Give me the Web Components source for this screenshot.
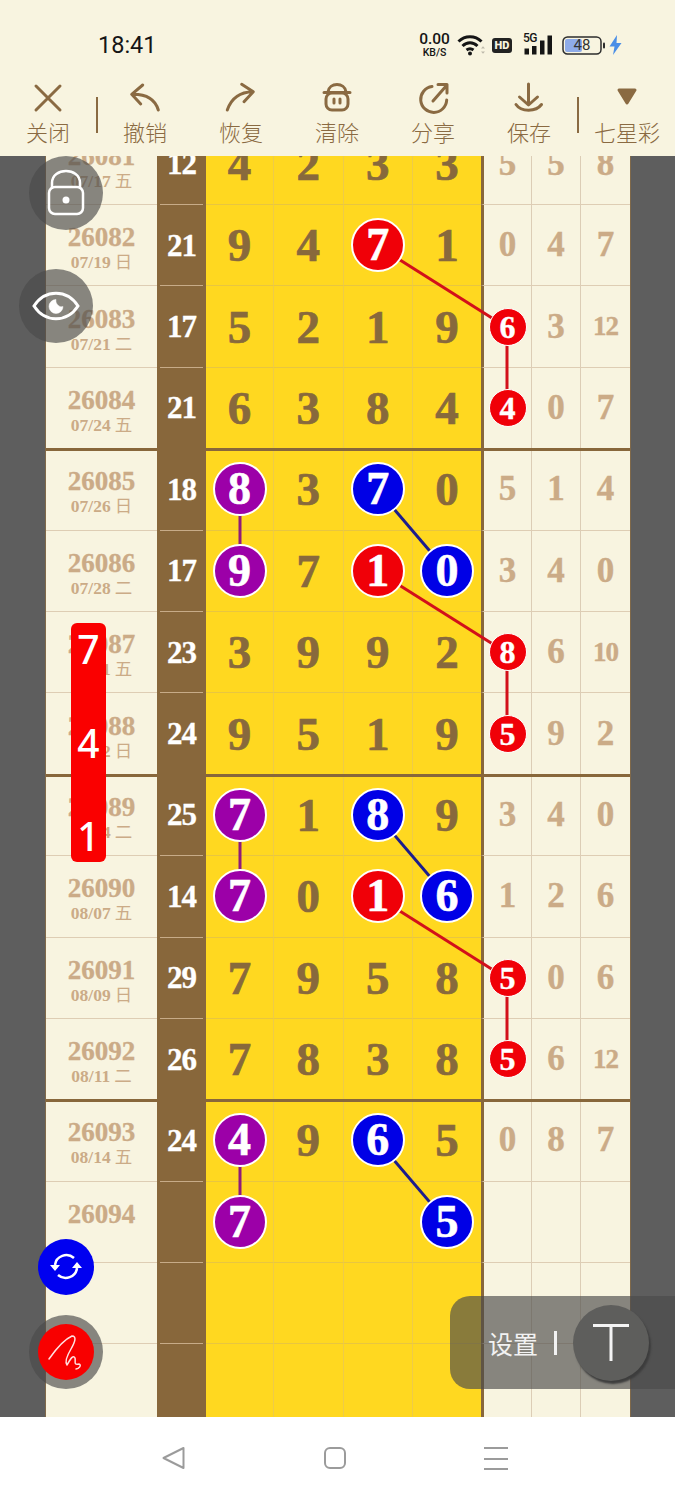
<!DOCTYPE html>
<html lang="zh">
<head>
<meta charset="utf-8">
<title>七星彩</title>
<style>
html, body { margin: 0; padding: 0; }
body { width: 675px; height: 1500px; overflow: hidden; position: relative; display: flex; flex-direction: column; background: #fff; font-family: "Noto Sans CJK SC", sans-serif; }
</style>
</head>
<body>
<status-bar></status-bar>
<tool-bar>
  <tool-item><svg slot="icon" width="40" height="40" viewBox="0 0 40 40"><path d="M8 9 32 33M32 9 8 33"/></svg>关闭</tool-item>
  <tool-sep class="first"></tool-sep>
  <tool-item><svg slot="icon" width="40" height="40" viewBox="0 0 40 40"><path d="M17.7 8 6.7 17.3 15.7 27M7 17.3C20 17 30 22 33.3 33"/></svg>撤销</tool-item>
  <tool-item><svg slot="icon" width="40" height="40" viewBox="0 0 40 40"><path d="M20.7 7.3 32.3 14.7 23 24.7M32 14.7C18 15 10 22 6.3 33"/></svg>恢复</tool-item>
  <tool-item><svg slot="icon" width="40" height="40" viewBox="0 0 40 40"><rect x="9" y="16" width="22" height="17" rx="6"/><path d="M7 15.5H33M11 15C12 5 28 5 29 15M17 22v4M23 22v4"/></svg>清除</tool-item>
  <tool-item><svg slot="icon" width="40" height="40" viewBox="0 0 40 40"><path d="M19 9.5A13 13 0 1 0 33.7 23M20 24 34 8M25 7.5H34V16"/></svg>分享</tool-item>
  <tool-item><svg slot="icon" width="40" height="40" viewBox="0 0 40 40"><path d="M19.5 7V27M10.5 20 19.5 28 28.5 20M7 27.5C12 35 27 35 32.5 27.5"/></svg>保存</tool-item>
  <tool-sep></tool-sep>
  <tool-item><svg slot="icon" width="40" height="40" viewBox="0 0 40 40"><path d="M12 13H28L20 26Z" fill="#8a6a42" stroke-width="3"/></svg>七星彩</tool-item>
</tool-bar>
<lotto-chart></lotto-chart>
<nav-bar></nav-bar>
<float-controls></float-controls>

<script>
const ROW_H = 81.4;

// issue, date, weekday, sum, four main numbers, three tail numbers. suffix = ball colour
const ROWS = [
    ['26081', '07/17', '五', '12', '4 2 3 3', '5 5 8'],
    ['26082', '07/19', '日', '21', '9 4 7r 1', '0 4 7'],
    ['26083', '07/21', '二', '17', '5 2 1 9', '6r 3 12'],
    ['26084', '07/24', '五', '21', '6 3 8 4', '4r 0 7'],
    ['26085', '07/26', '日', '18', '8p 3 7b 0', '5 1 4'],
    ['26086', '07/28', '二', '17', '9p 7 1r 0b', '3 4 0'],
    ['26087', '07/31', '五', '23', '3 9 9 2', '8r 6 10'],
    ['26088', '08/02', '日', '24', '9 5 1 9', '5r 9 2'],
    ['26089', '08/04', '二', '25', '7p 1 8b 9', '3 4 0'],
    ['26090', '08/07', '五', '14', '7p 0 1r 6b', '1 2 6'],
    ['26091', '08/09', '日', '29', '7 9 5 8', '5r 0 6'],
    ['26092', '08/11', '二', '26', '7 8 3 8', '5r 6 12'],
    ['26093', '08/14', '五', '24', '4p 9 6b 5', '0 8 7'],
    ['26094', '', '', '', '7p - - 5b', '- - -'],
    ['', '', '', '', '- - - -', '- - -'],
    ['', '', '', '', '- - - -', '- - -']
];

// from row, from column, to row, to column (column 4 is the first tail column)
const LINKS = [
    [1, 2, 2, 4, '#d2101a'], [2, 4, 3, 4, '#d2101a'],
    [4, 0, 5, 0, '#8e1a7c'], [4, 2, 5, 3, '#1c1c8c'],
    [5, 2, 6, 4, '#d2101a'], [6, 4, 7, 4, '#d2101a'],
    [8, 0, 9, 0, '#8e1a7c'], [8, 2, 9, 3, '#1c1c8c'],
    [9, 2, 10, 4, '#d2101a'], [10, 4, 11, 4, '#d2101a'],
    [12, 0, 13, 0, '#8e1a7c'], [12, 2, 13, 3, '#1c1c8c']
];
const COL_X = [195, 264, 333, 402.5, 462];

class StatusBar extends HTMLElement {
    constructor() {
        super();
        this.attachShadow({ mode: 'open' }).innerHTML = `
            <style>
                :host { display: flex; align-items: center; height: 77px; padding: 13px 0 0 98px; box-sizing: border-box; background: #f8f4e0; color: #151515; font-family: Roboto, sans-serif; }
                .time { font-size: 23.5px; font-weight: 400; width: 320px; }
                .speed { width: 33px; text-align: center; font-weight: 500; line-height: 1; }
                .speed b { display: block; font-size: 15.5px; font-weight: 500; }
                .speed i { display: block; font-style: normal; font-size: 10.5px; margin-top: 1px; }
                .wifi { margin-left: 6px; }
                .hd { margin-left: 7px; width: 20px; height: 15px; border-radius: 3px; background: #222; color: #f8f4e0; font-size: 11px; font-weight: 900; text-align: center; line-height: 15px; }
                .sig { margin-left: 11px; position: relative; width: 29px; height: 20px; }
                .sig span { position: absolute; left: 0; top: -3px; font-size: 12px; font-weight: 500; letter-spacing: -.5px; line-height: 12px; }
                .sig svg { position: absolute; left: 0; top: 0; }
                .bat { margin-left: 10px; position: relative; width: 44px; height: 19px; }
                .bat span { position: absolute; left: 0; right: 4px; top: 0; text-align: center; font-size: 15px; line-height: 19px; color: #333; }
                .bat svg { position: absolute; left: 0; top: 0; }
                .bolt { margin-left: 3px; }
            </style>
            <span class="time">18:41</span>
            <div class="speed"><b>0.00</b><i>KB/S</i></div>
            <svg class="wifi" width="28" height="22" viewBox="0 0 28 22" fill="none" stroke="#151515" stroke-width="3">
                <path d="M1.5 7.5C8 1 18 1 24.5 7.5M5.5 12C10 7.8 16 7.8 20.500 12M9.500 16C11.500 14.500 14.500 14.500 16.500 16"/>
                <circle cx="13" cy="19.500" r="2" fill="#151515" stroke="none"/>
                <path d="M24 14.500l2-2.300 2 2.300zM24 17.500l2 2.300 2-2.300z" fill="#bdb9aa" stroke="none"/>
            </svg>
            <div class="hd">HD</div>
            <div class="sig"><span>5G</span>
                <svg width="29" height="20" viewBox="0 0 29 20" fill="#151515"><rect x="1.500" y="13.500" width="4.500" height="6" /><rect x="9" y="11" width="4.500" height="8.500"/><rect x="17" y="5.500" width="4.500" height="14"/><rect x="24.500" y="0.500" width="4.500" height="19"/></svg>
            </div>
            <div class="bat">
                <svg width="44" height="19" viewBox="0 0 44 19"><rect x="3" y="3" width="17" height="13" rx="2" fill="#8eabe8"/><rect x="1" y="1" width="38" height="17" rx="4.500" fill="none" stroke="#2c2c2c" stroke-width="1.500"/><rect x="41" y="6.500" width="2" height="6" rx="1" fill="#2c2c2c"/></svg>
                <span>48</span>
            </div>
            <svg class="bolt" width="13" height="20" viewBox="0 0 13 20"><path d="M8 0 0.500 11.500H5.500L4 20 12.500 8H7.500Z" fill="#4a8ee6"/></svg>
        `;
    }
}

class ToolBar extends HTMLElement {
    constructor() {
        super();
        this.attachShadow({ mode: 'open' }).innerHTML = `
            <style>
                :host { display: flex; height: 79px; background: #f8f4e0; }
            </style>
            <slot></slot>
        `;
    }
}

class ToolItem extends HTMLElement {
    constructor() {
        super();
        this.attachShadow({ mode: 'open' }).innerHTML = `
            <style>
                :host { display: flex; flex-direction: column; align-items: center; width: 96px; height: 79px; color: #8a6a42; font-family: "Noto Sans CJK SC", sans-serif; font-size: 22px; font-weight: 300; line-height: 26px; }
                ::slotted(svg) { display: block; height: 40px; fill: none; stroke: #8a6a42; stroke-width: 3; stroke-linecap: round; stroke-linejoin: round; }
                .label { margin-top: 1px; white-space: nowrap; }
            </style>
            <slot name="icon"></slot>
            <div class="label"><slot></slot></div>
        `;
    }
}

class ToolSep extends HTMLElement {
    constructor() {
        super();
        this.attachShadow({ mode: 'open' }).innerHTML = `
            <style>
                :host { display: block; width: 2px; height: 36px; margin-top: 20px; background: #8a6a42; }
                :host(.first) { margin-right: -1px; }
            </style>
        `;
    }
}

class LottoBall extends HTMLElement {
    constructor() {
        super();
        this.attachShadow({ mode: 'open' }).innerHTML = `
            <style>
                :host { position: relative; z-index: 2; display: flex; align-items: center; justify-content: center; width: 50px; height: 50px; border: 2.500px solid #fff; border-radius: 50%; color: #fff; font-size: 46px; line-height: 1; flex: none; -webkit-text-stroke: .6px #fff; }
                :host([small]) { width: 36px; height: 36px; border-width: 1px; font-size: 32px; -webkit-text-stroke: .4px #fff; }
                :host([tone="r"]) { background: #f00008; }
                :host([tone="p"]) { background: #9c00a8; }
                :host([tone="b"]) { background: #0000e6; }
            </style>
            <slot></slot>
        `;
    }
}

class ChartRow extends HTMLElement {
    set data(row) {
        const [issue, date, week, sum, main, tail] = row;
        const cell = (value, cls, small) => {
            const tone = value.match(/[rpb]$/);
            if (value === '-') return `<div class="${cls}"></div>`;
            if (tone) {
                return `<div class="${cls}"><lotto-ball tone="${tone[0]}" ${small ? 'small' : ''}>${value[0]}</lotto-ball></div>`;
            }
            return `<div class="${cls}${value.length > 1 ? ' wide' : ''}">${value}</div>`;
        };
        this.attachShadow({ mode: 'open' }).innerHTML = `
            <style>
                :host { display: grid; grid-template-columns: 111px 49px 68px 69.500px 69.500px 68px 51px 49px 49px; height: ${ROW_H}px; position: relative; font-family: "Liberation Serif", "Noto Sans CJK SC", serif; font-weight: 700; }
                :host(.thick)::after { content: ""; position: absolute; z-index: 1; left: 0; right: 0; bottom: -2px; height: 3px; background: #88673b; }
                .issue { background: #f8f4e0; border-bottom: 1px solid #decdb4; color: #cbab87; display: flex; flex-direction: column; align-items: center; justify-content: center; padding-top: 7px; box-sizing: border-box; }
                .issue b { font-size: 27px; line-height: 27px; height: 27px; -webkit-text-stroke: .3px #cbab87; }
                .issue span { font-size: 17.500px; line-height: 22px; height: 22px; white-space: nowrap; }
                .issue em { font-style: normal; font-weight: 400; margin-left: 4px; }
                .sum { position: relative; z-index: 2; background: #88673b; color: #fff; font-size: 31px; letter-spacing: -1px; display: flex; align-items: center; justify-content: center; -webkit-text-stroke: .3px #fff; }
                .sum::after { content: ""; position: absolute; left: 3px; right: 3px; bottom: 0; height: 1px; background: #c7ab88; }
                :host(.thick) .sum::after { display: none; }
                .main, .tail { display: flex; align-items: center; justify-content: center; box-sizing: border-box; }
                .main { background: #ffd820; color: #88693c; font-size: 47px; border-right: 1px solid #eecb48; border-bottom: 1px solid #e8c640; -webkit-text-stroke: .7px #88693c; }
                .tail { background: #f8f4e0; color: #cbab87; font-size: 35px; border-right: 1px solid #dccdb6; border-bottom: 1px solid #decdb4; -webkit-text-stroke: .4px #cbab87; }
                .tail.wide { font-size: 27px; letter-spacing: -1px; }
                .tail:last-child { border-right: 0; }
                .main.last { border-right: 0; }
                .tail.first { border-left: 3px solid #88673b; }
            </style>
            <div class="issue"><b>${issue}</b><span>${date}${week ? `<em>${week}</em>` : ''}</span></div>
            <div class="sum">${sum}</div>
            ${main.split(' ').map((v, i) => cell(v, i === 3 ? 'main last' : 'main', false)).join('')}
            ${tail.split(' ').map((v, i) => cell(v, i === 0 ? 'tail first' : 'tail', true)).join('')}
        `;
    }
}

class LottoChart extends HTMLElement {
    constructor() {
        super();
        const shadow = this.attachShadow({ mode: 'open' });
        const height = ROW_H * ROWS.length;
        const lines = LINKS.map(([r1, c1, r2, c2, color]) => {
            const y1 = (r1 + 0.5) * ROW_H;
            const y2 = (r2 + 0.5) * ROW_H;
            return `<line x1="${COL_X[c1]}" y1="${y1}" x2="${COL_X[c2]}" y2="${y2}" stroke="${color}" stroke-width="3"/>`;
        }).join('');
        shadow.innerHTML = `
            <style>
                :host { display: block; height: 1261px; overflow: hidden; background: #5e5e5e; padding: 0 44px 0 45px; box-sizing: border-box; }
                .sheet { position: relative; z-index: 0; margin-top: -32.400px; border-left: 1px solid #80694a; border-right: 1px solid #80694a; }
                svg { position: absolute; left: -1px; top: 0; z-index: 1; }
            </style>
            <div class="sheet">
                <svg width="586" height="${height}" viewBox="0 0 586 ${height}">${lines}</svg>
            </div>
        `;
        const sheet = shadow.querySelector('.sheet');
        ROWS.forEach((row, i) => {
            const el = document.createElement('chart-row');
            if (i % 4 === 3 && i < 13) el.classList.add('thick');
            el.data = row;
            sheet.appendChild(el);
        });
    }
}

class NavBar extends HTMLElement {
    constructor() {
        super();
        this.attachShadow({ mode: 'open' }).innerHTML = `
            <style>
                :host { display: flex; align-items: flex-start; justify-content: center; gap: 137px; height: 83px; padding: 29px 6px 0 0; box-sizing: border-box; background: #fff; }
                svg { display: block; fill: none; stroke: #9b9b9b; stroke-width: 2; stroke-linejoin: round; }
            </style>
            <svg width="24" height="24" viewBox="0 0 24 24"><path d="M1.500 12 21.500 2V22Z"/></svg>
            <svg width="24" height="24" viewBox="0 0 24 24"><rect x="2" y="2" width="20" height="20" rx="5"/></svg>
            <svg width="24" height="24" viewBox="0 0 24 24"><path d="M0 2H24M0 13H24M0 23H24"/></svg>
        `;
    }
}

class FloatControls extends HTMLElement {
    constructor() {
        super();
        this.attachShadow({ mode: 'open' }).innerHTML = `
            <style>
                :host { position: absolute; left: 0; top: 0; width: 675px; height: 1500px; pointer-events: none; font-family: "Noto Sans CJK SC", sans-serif; }
                .round { position: absolute; width: 74px; height: 74px; border-radius: 50%; background: rgba(73, 73, 73, .65); display: flex; align-items: center; justify-content: center; }
                .lock { left: 29px; top: 156px; }
                .eye { left: 19px; top: 269px; }
                .pen { left: 29px; top: 1315px; }
                .pen div { width: 56px; height: 56px; border-radius: 50%; background: #f80000; display: flex; align-items: center; justify-content: center; }
                .sync { position: absolute; left: 38px; top: 1239px; width: 56px; height: 56px; border-radius: 50%; background: #0000f0; display: flex; align-items: center; justify-content: center; }
                .bar { position: absolute; left: 71px; top: 623px; width: 35px; height: 239px; box-sizing: border-box; border-radius: 6px; background: #fa0000; color: #fff; font-size: 39px; font-weight: 500; line-height: 52px; display: flex; flex-direction: column; justify-content: space-between; align-items: center; font-family: "Noto Sans", sans-serif; }
                .pill { position: absolute; left: 450px; top: 1296px; width: 225px; height: 93px; border-radius: 20px 0 0 20px; background: rgba(73, 73, 73, .65); color: #f2f2f2; font-size: 25px; display: flex; align-items: center; padding-left: 38px; box-sizing: border-box; }
                .pill i { width: 2.500px; height: 24px; background: #f2f2f2; margin: 0 16px 0 16px; }
                .t { width: 76px; height: 76px; border-radius: 50%; background: #5e5e5c; box-shadow: 2px 3px 2px #3d3d3d; margin-left: 0; flex: none; display: flex; align-items: center; justify-content: center; }
            </style>
            <div class="round lock">
                <svg width="40" height="50" viewBox="0 0 40 50" fill="none" stroke="#fff" stroke-width="2.500"><path d="M6 21V15C6 -1 34 -1 34 15V21"/><rect x="3" y="19" width="34" height="27" rx="6"/><circle cx="20" cy="32" r="3.500" fill="#fff" stroke="none"/></svg>
            </div>
            <div class="round eye">
                <svg width="48" height="34" viewBox="0 0 48 34"><path d="M2 17C13 0 35 0 46 17 35 34 13 34 2 17Z" fill="none" stroke="#fff" stroke-width="3"/><path d="M24 10.500A7 7 0 1 0 31 17.500C28 19 23 15 24 10.500Z" fill="#fff" stroke="#fff" stroke-width=".5"/></svg>
            </div>
            <div class="bar"><span>7</span><span>4</span><span>1</span></div>
            <div class="sync">
                <svg width="32" height="28" viewBox="0 0 32 28" fill="none" stroke="#fff" stroke-width="2.500"><path d="M5 12C6 3 17 -1 24 5"/><path d="M27 15C26 24 15 28 8 22"/><path d="M0 12H10L5 18ZM22 15H32L27 9Z" fill="#fff" stroke="none"/></svg>
            </div>
            <div class="round pen"><div>
                <svg width="40" height="40" viewBox="0 0 40 40" fill="none" stroke="#ffe0e0" stroke-width="1.500" stroke-linecap="round" stroke-linejoin="round"><path d="M3 27C10 17 17 8 26 4 31 4 29 10 25 17 22 22 18 29 21 33 24 28 27 22 29 26 30 30 27 33 33 32 36 33 33 37 30 37"/></svg>
            </div></div>
            <div class="pill">设置<i></i><div class="t">
                <svg width="38" height="40" viewBox="0 0 38 40" stroke="#f4f4f4" stroke-width="3"><path d="M1 2.500H37M19 2.500V38"/></svg>
            </div></div>
        `;
    }
}

customElements.define('status-bar', StatusBar);
customElements.define('tool-bar', ToolBar);
customElements.define('tool-item', ToolItem);
customElements.define('tool-sep', ToolSep);
customElements.define('lotto-ball', LottoBall);
customElements.define('chart-row', ChartRow);
customElements.define('lotto-chart', LottoChart);
customElements.define('nav-bar', NavBar);
customElements.define('float-controls', FloatControls);
</script>
</body>
</html>
